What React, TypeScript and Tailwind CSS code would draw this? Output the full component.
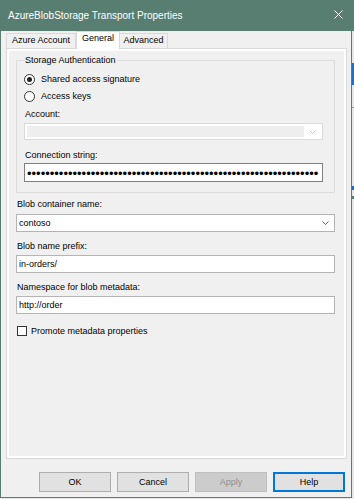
import React from "react";

const Chevron = ({ color }: { color: string }) => (
  <svg width="7" height="4" viewBox="0 0 7 4">
    <path d="M0.5 0.5 L3.5 3.5 L6.5 0.5" fill="none" stroke={color} strokeWidth="1" />
  </svg>
);

const Radio = ({ checked, label }: { checked?: boolean; label: string }) => (
  <div className="flex h-[14px] items-center">
    <span className="flex h-[11px] w-[11px] items-center justify-center rounded-full border border-[#333333] bg-white">
      {checked && <span className="h-[5px] w-[5px] rounded-full bg-[#222222]" />}
    </span>
    <span className="ml-[6px]">{label}</span>
  </div>
);

const Button = ({ label, disabled, focused }: { label: string; disabled?: boolean; focused?: boolean }) => (
  <div
    className={
      disabled
        ? "flex h-[20px] w-[72px] items-center justify-center border border-[#bfbfbf] bg-[#cccccc] text-[#8f8f8f]"
        : focused
        ? "flex h-[20px] w-[72px] items-center justify-center border-2 border-[#0078d7] bg-[#e1e1e1]"
        : "flex h-[20px] w-[72px] items-center justify-center border border-[#adadad] bg-[#e1e1e1]"
    }
  >
    {label}
  </div>
);

export default function App() {
  const dots = "•".repeat(64);
  return (
    <div className="flex h-[499px] w-[354px] flex-col bg-[#e4e8e7] font-['Liberation_Sans',Arial,sans-serif] text-[9px] leading-[11px] text-black">
      {/* Title bar */}
      <div className="flex h-[31px] w-full shrink-0 items-center justify-between bg-[#587e72] pl-[8px] pr-[11px] text-white">
        <span className="text-[10px] leading-[12px]">AzureBlobStorage Transport Properties</span>
        <svg width="9" height="9" viewBox="0 0 9 9" className="mb-[3px]">
          <path d="M0.5 0.5 L8.5 8.5 M8.5 0.5 L0.5 8.5" stroke="#ffffff" strokeWidth="1" fill="none" />
        </svg>
      </div>

      <div className="flex flex-1">
        {/* Window body */}
        <div className="flex h-[467px] w-[352px] shrink-0 flex-col border-x border-b border-[#587e72] bg-[#f0f0f0]">
          {/* Tabs */}
          <div className="relative z-10 -mb-[1px] flex h-[18px] items-end pl-[5px]">
            <div className="flex h-[16px] w-[70px] justify-center border border-[#d9d9d9] bg-[#f0f0f0] pt-[1px]">
              Azure Account
            </div>
            <div className="flex h-[18px] w-[44px] justify-center border-x border-t border-[#d9d9d9] bg-white pt-[1px]">
              General
            </div>
            <div className="flex h-[16px] w-[48px] justify-center border border-l-0 border-[#d9d9d9] bg-[#f0f0f0] pt-[1px]">
              Advanced
            </div>
          </div>

          {/* Tab panel */}
          <div className="ml-[5px] h-[411px] w-[341px] shrink-0 border border-[#d9d9d9] bg-white p-[2px]">
            <div className="flex h-full flex-col bg-[#f0f0f0]">
              <fieldset className="ml-[7px] mt-[4px] w-[319px] border border-[#dcdcdc] pb-[10px] pl-[7px]">
                <legend className="px-[1px]">Storage Authentication</legend>
                <div className="mt-[6px]">
                  <Radio checked label="Shared access signature" />
                </div>
                <div className="mt-[3px]">
                  <Radio label="Access keys" />
                </div>
                <div className="ml-[1px] mt-[6px]">Account:</div>
                <div className="mt-[3px] flex h-[17px] w-[299px] border border-[#d9d9d9] bg-white p-[2px]">
                  <div className="flex-1 bg-[#eeeeee]" />
                  <div className="flex w-[16px] items-center justify-center">
                    <Chevron color="#c4c4c4" />
                  </div>
                </div>
                <div className="ml-[1px] mt-[10px]">Connection string:</div>
                <div className="mt-[2px] flex h-[19px] w-[299px] items-center whitespace-nowrap border border-[#7f7f7f] bg-white pl-[2px] pt-[2px] text-[13px] leading-[14px]">
                  <span>{dots}</span>
                </div>
              </fieldset>

              <div className="ml-[8px] mt-[6px]">Blob container name:</div>
              <div className="ml-[7px] mt-[4px] flex h-[18px] w-[319px] items-center border border-[#b4b4b4] bg-white pl-[2px]">
                <span className="flex-1">contoso</span>
                <div className="flex w-[17px] items-center justify-center">
                  <Chevron color="#5f5f5f" />
                </div>
              </div>

              <div className="ml-[8px] mt-[9px]">Blob name prefix:</div>
              <div className="ml-[7px] mt-[3px] flex h-[18px] w-[319px] items-center border border-[#b4b4b4] bg-white pl-[2px]">
                in-orders/
              </div>

              <div className="ml-[8px] mt-[9px]">Namespace for blob metadata:</div>
              <div className="ml-[7px] mt-[3px] flex h-[18px] w-[319px] items-center border border-[#b4b4b4] bg-white pl-[2px]">
                http://order
              </div>

              <div className="ml-[8px] mt-[11px] flex h-[12px] items-center">
                <span className="h-[10px] w-[10px] border border-[#333333] bg-white" />
                <span className="ml-[4px]">Promote metadata properties</span>
              </div>
            </div>
          </div>

          {/* Buttons */}
          <div className="mt-[13px] flex justify-end gap-[6px] pr-[6px]">
            <Button label="OK" />
            <Button label="Cancel" />
            <Button label="Apply" disabled />
            <Button label="Help" focused />
          </div>
        </div>

        {/* Desktop behind the window */}
        <div className="flex flex-1 flex-col">
          <div className="mt-[32px] h-[22px] bg-[#1f6fc5]" />
          <div className="mt-[22px] h-[1px] bg-[#8a9a96]" />
          <div className="mt-[78px] h-[4px] bg-[#1f6fc5]" />
          <div className="mt-[6px] h-[3px] bg-[#587e72]" />
        </div>
      </div>
    </div>
  );
}
